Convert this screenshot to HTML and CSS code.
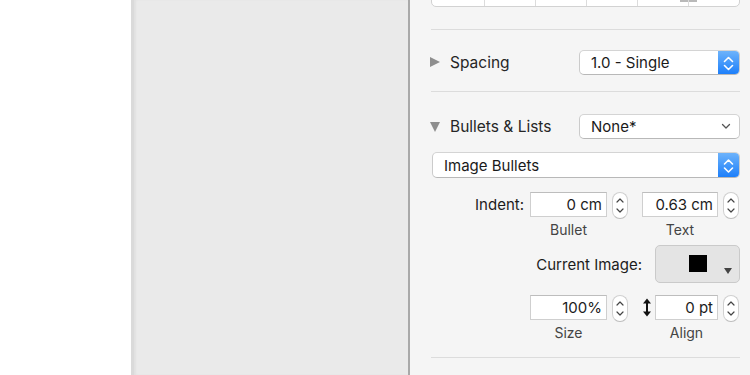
FILE: index.html
```html
<!DOCTYPE html>
<html lang="en">
<head>
    <meta charset="UTF-8">
    <title>Format - Text</title>
    <link rel="stylesheet" href="styles.css">
</head>
<body>
    <div class="page-area"></div>
    <div class="canvas"></div>

    <div class="inspector">
        <div class="segments">
            <span class="seg"></span>
            <span class="seg"></span>
            <span class="seg"></span>
            <span class="seg"></span>
            <span class="seg"><i class="seg-icon"></i></span>
            <span class="seg"></span>
        </div>

        <hr class="rule rule-top">

        <div class="section-row spacing-row">
            <span class="disclosure closed"></span>
            <span class="section-title">Spacing</span>
            <div class="popup popup-small">
                <span class="popup-text">1.0 - Single</span>
                <span class="popup-blue">
                    <svg width="21" height="25" viewBox="0 0 21 25"><path d="M6.5 10.5 L10.5 6.5 L14.5 10.5 M6.5 14.5 L10.5 18.5 L14.5 14.5" fill="none" stroke="#fff" stroke-width="1.6" stroke-linecap="round" stroke-linejoin="round"/></svg>
                </span>
            </div>
        </div>

        <hr class="rule rule-mid">

        <div class="section-row bullets-row">
            <span class="disclosure open"></span>
            <span class="section-title">Bullets &amp; Lists</span>
            <div class="popup popup-small">
                <span class="popup-text">None*</span>
                <svg class="pull-chevron" width="10" height="7" viewBox="0 0 10 7"><path d="M1.5 1.5 L5 5 L8.5 1.5" fill="none" stroke="#555" stroke-width="1.3" stroke-linecap="round" stroke-linejoin="round"/></svg>
            </div>
        </div>

        <div class="popup popup-wide">
            <span class="popup-text">Image Bullets</span>
            <span class="popup-blue">
                <svg width="21" height="26" viewBox="0 0 21 26"><path d="M6.5 11 L10.5 7 L14.5 11 M6.5 15 L10.5 19 L14.5 15" fill="none" stroke="#fff" stroke-width="1.6" stroke-linecap="round" stroke-linejoin="round"/></svg>
            </span>
        </div>

        <div class="field-row indent-row">
            <span class="field-label">Indent:</span>
            <span class="field field-a">0 cm</span>
            <span class="stepper">
                <svg width="16" height="27" viewBox="0 0 16 27"><path d="M5 10 L8 7 L11 10 M5 17 L8 20 L11 17" fill="none" stroke="#444" stroke-width="1.2" stroke-linecap="round" stroke-linejoin="round"/></svg>
            </span>
            <span class="field field-b">0.63 cm</span>
            <span class="stepper">
                <svg width="16" height="27" viewBox="0 0 16 27"><path d="M5 10 L8 7 L11 10 M5 17 L8 20 L11 17" fill="none" stroke="#444" stroke-width="1.2" stroke-linecap="round" stroke-linejoin="round"/></svg>
            </span>
        </div>
        <div class="caption-row indent-captions">
            <span class="caption cap-a">Bullet</span>
            <span class="caption cap-b">Text</span>
        </div>

        <div class="image-row">
            <span class="field-label">Current Image:</span>
            <div class="image-well">
                <span class="bullet-square"></span>
                <span class="well-arrow"></span>
            </div>
        </div>

        <div class="field-row size-row">
            <span class="field field-a">100%</span>
            <span class="stepper">
                <svg width="16" height="27" viewBox="0 0 16 27"><path d="M5 10 L8 7 L11 10 M5 17 L8 20 L11 17" fill="none" stroke="#444" stroke-width="1.2" stroke-linecap="round" stroke-linejoin="round"/></svg>
            </span>
            <span class="align-icon">
                <svg width="27" height="25" viewBox="0 0 27 25"><path d="M19 5 V20" stroke="#111" stroke-width="2"/><path d="M15 8.5 L19 3.5 L23 8.5 Z M15 16.5 L19 21.5 L23 16.5 Z" fill="#111"/></svg>
            </span>
            <span class="field field-c">0 pt</span>
            <span class="stepper">
                <svg width="16" height="27" viewBox="0 0 16 27"><path d="M5 10 L8 7 L11 10 M5 17 L8 20 L11 17" fill="none" stroke="#444" stroke-width="1.2" stroke-linecap="round" stroke-linejoin="round"/></svg>
            </span>
        </div>
        <div class="caption-row size-captions">
            <span class="caption cap-a">Size</span>
            <span class="caption cap-c">Align</span>
        </div>

        <hr class="rule rule-bottom">
    </div>
</body>
</html>
```

FILE: styles.css
```css
html, body { margin: 0; padding: 0; height: 100%; }
body { display: flex; font-family: "Inter", "Liberation Sans", sans-serif; font-size: 15px; color: #1c1c1c; background-color: #fff; overflow: hidden; }

.page-area { width: 131px; flex-shrink: 0; background-color: #fff; }
.canvas { width: 274px; flex-shrink: 0; background-color: #eaeaea; border-left: 3px solid #dadada; border-right: 2px solid #a9a9a9; box-shadow: inset 2px 0 2px rgba(0,0,0,0.04); }

.inspector { flex: 1; background-color: #f5f5f5; padding: 0 10px 0 21px; }

.segments { display: flex; height: 24px; margin-top: -19px; background-color: #fff; border: 1px solid #d2d2d2; border-radius: 5px; overflow: hidden; }
.seg { flex: 1; position: relative; border-left: 1px solid #dcdcdc; }
.seg:first-child { flex: 0 0 52px; border-left: none; }
.seg-icon { position: absolute; left: 42px; bottom: 4px; width: 17px; height: 3px; background-color: #b9b9b9; }

.rule { border: none; border-top: 1px solid #dcdcdc; margin: 0; }
.rule-top { margin-top: 22px; }
.rule-mid { margin-top: 16px; }
.rule-bottom { margin-top: 16px; }

.section-row { display: flex; align-items: center; height: 25px; }
.spacing-row { margin-top: 20px; }
.bullets-row { margin-top: 22px; }
.section-title { flex: 1; font-size: 15.5px; color: #262626; padding-left: 9px; }

.disclosure { width: 11px; height: 11px; position: relative; margin-left: -1px; }
.disclosure.closed::before { content: ""; position: absolute; left: 0; top: 0; border-left: 10px solid #8e8e8e; border-top: 5.5px solid transparent; border-bottom: 5.5px solid transparent; }
.disclosure.open::before { content: ""; position: absolute; left: 0; top: 1px; border-top: 10px solid #8e8e8e; border-left: 5.5px solid transparent; border-right: 5.5px solid transparent; }

.popup { display: flex; align-items: center; background-color: #fff; border: 1px solid #cbcbcb; border-top-color: #d4d4d4; border-bottom-color: #b8b8b8; border-radius: 5px; box-sizing: border-box; overflow: hidden; }
.popup-small { width: 161px; height: 25px; }
.popup-wide { margin-top: 13px; width: 308px; height: 26px; margin-left: 1px; }
.popup-text { flex: 1; padding-left: 11px; font-size: 15px; color: #1a1a1a; }
.popup-blue { width: 21px; height: 100%; display: flex; background: linear-gradient(#6db3fb, #1d7ffa); }
.popup-blue svg { display: block; }
.pull-chevron { margin-right: 8px; }

.field-row { display: flex; align-items: flex-start; height: 27px; }
.indent-row { margin-top: 14px; }
.size-row { margin-top: 12px; padding-left: 99px; }
.field-label { font-size: 15px; color: #1c1c1c; }
.indent-row .field-label { width: 93px; text-align: right; line-height: 25px; margin-right: 6px; }

.field { height: 25px; box-sizing: border-box; background-color: #fff; border: 1px solid #cfcfcf; border-top-color: #bdbdbd; text-align: right; padding-right: 4px; line-height: 24px; font-size: 15px; color: #1c1c1c; }
.field-a { width: 77px; }
.field-b { width: 76px; margin-left: 14px; }
.field-c { width: 63px; }

.stepper { width: 16px; height: 27px; box-sizing: border-box; margin-left: 5px; background-color: #fff; border: 1px solid #d0d0d0; border-bottom-color: #bcbcbc; border-radius: 8px; display: flex; }
.stepper svg { display: block; margin: -1px; }

.align-icon { width: 27px; height: 25px; display: flex; }

.caption-row { display: flex; height: 16px; margin-top: 3px; padding-left: 99px; }
.caption { font-size: 14px; color: #444; text-align: center; line-height: 16px; }
.cap-a { width: 77px; }
.cap-b { width: 76px; margin-left: 35px; }
.cap-c { width: 63px; margin-left: 48px; }

.image-row { display: flex; align-items: center; justify-content: flex-end; margin-top: 7px; }
.image-row .field-label { margin-right: 13px; }
.image-well { width: 85px; height: 38px; box-sizing: border-box; background-color: #e4e4e4; border: 1px solid #cacaca; border-radius: 5px; position: relative; }
.bullet-square { position: absolute; left: 33px; top: 9px; width: 18px; height: 17px; background-color: #000; }
.well-arrow { position: absolute; left: 68px; top: 22px; border-top: 6px solid #444; border-left: 4px solid transparent; border-right: 4px solid transparent; }
```
